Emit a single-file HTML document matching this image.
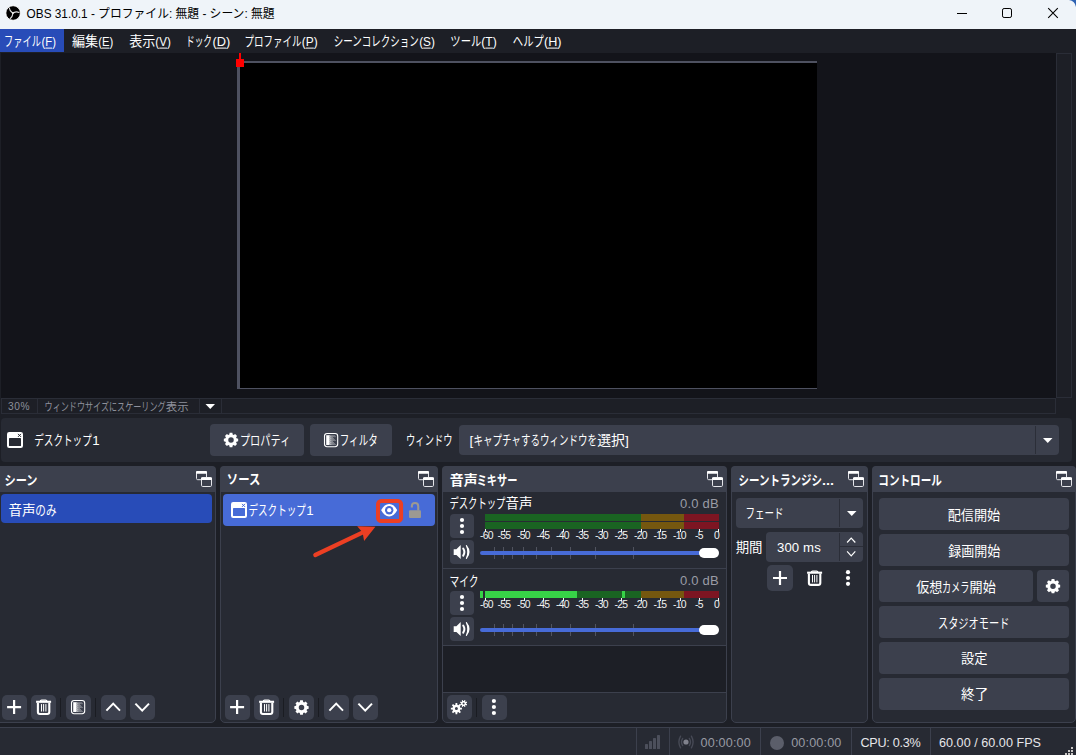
<!DOCTYPE html>
<html lang="ja">
<head>
<meta charset="utf-8">
<title>OBS 31.0.1 - プロファイル: 無題 - シーン: 無題</title>
<style>
*{box-sizing:border-box;margin:0;padding:0}
html,body{width:1076px;height:755px;overflow:hidden;background:#1d1f26}
body{font-family:"Liberation Sans",sans-serif;font-size:13px;color:#fff;position:relative}
#app{position:absolute;left:0;top:0;width:1076px;height:755px;overflow:hidden;background:#1d1f26}
.a{position:absolute}
.tp{position:absolute;overflow:visible;pointer-events:none}
.tp text{font-family:"Liberation Sans","Noto Sans CJK JP",sans-serif;stroke:none}
.tl{position:absolute;color:transparent;white-space:nowrap;overflow:hidden;line-height:1;font-family:"Liberation Sans",sans-serif}
.lt{position:absolute;white-space:nowrap;line-height:1;font-family:"Liberation Sans",sans-serif}
.ic{position:absolute;overflow:visible}
/* title bar */
#titlebar{left:0;top:0;width:1076px;height:29px;background:#eff4f9}
/* menu */
#menubar{left:0;top:29px;width:1076px;height:24px;background:#1d1f26}
#menusel{left:0;top:29px;width:64px;height:23px;background:#284cb8}
/* preview */
#preview{left:1px;top:53px;width:1055px;height:345px;background:#13141a}
#vscroll{left:1056px;top:53px;width:16px;height:345px;background:#1d1f26;border:1px solid #2a2d37}
#zoomrow{left:1px;top:398px;width:1055px;height:16px;background:#1d1f26;border:1px solid #2a2d37}
.zsep{top:398px;width:1px;height:16px;background:#2a2d37}
#canvasb{left:237px;top:61px;width:580px;height:328px;background:#4e5160}
#canvas{left:240px;top:63px;width:577px;height:325px;background:#000}
#rsq{left:236px;top:59px;width:8px;height:8px;background:#f00}
#rln{left:239px;top:53px;width:2px;height:6px;background:#f00}
/* context bar */
#ctx{left:1px;top:418px;width:1071px;height:44px;background:#272a33;border-radius:4px}
.btn{position:absolute;background:#3c404d;border-radius:4px}
/* docks */
.dock{position:absolute;top:466px;height:257px;background:#272a33;border:1px solid #3c404d;border-radius:5px}
.dtitle{position:absolute;top:466px;height:26px;background:#3c404d;border-radius:4px 4px 0 0}
.tb{position:absolute;width:25px;height:25px;background:#3c404d;border-radius:5px}
.sep{position:absolute;width:1px;background:#1a1c22}
.hl{position:absolute;height:1px;background:#3c404d}
/* status bar */
#status{left:0;top:727px;width:1076px;height:28px;background:#272a33;border-top:1px solid #3c404d}
.ssep{position:absolute;top:728px;width:1px;height:27px;background:#3c404d}
</style>
</head>
<body>
<div id="app">

<!-- ===== window title bar ===== -->
<div id="titlebar" class="a"></div>
<svg class="ic" style="left:4px;top:4px" width="19" height="19" viewBox="0 0 19 19"><g transform="translate(0.10 0.00)"><circle cx="9" cy="9" r="7.30" fill="#000" stroke="#fff" stroke-width="0.9"/><path d="M0 0C-1.5 -1.2 -3.2 -1.8 -3.5 -5.0" fill="none" stroke="#dcdcdc" stroke-width="1.15" stroke-linecap="round" transform="translate(8.75 9) rotate(0)"/><path d="M0 0C-1.5 -1.2 -3.2 -1.8 -3.5 -5.0" fill="none" stroke="#dcdcdc" stroke-width="1.15" stroke-linecap="round" transform="translate(8.75 9) rotate(120)"/><path d="M0 0C-1.5 -1.2 -3.2 -1.8 -3.5 -5.0" fill="none" stroke="#dcdcdc" stroke-width="1.15" stroke-linecap="round" transform="translate(8.75 9) rotate(240)"/><circle cx="8.75" cy="9" r="1.0" fill="#e8e8e8"/></g></svg>
<svg class="tp" style="left:25px;top:5px" width="253" height="18" fill="#000"><text x="1.6" y="13.1" font-size="12.2" textLength="248" lengthAdjust="spacingAndGlyphs">OBS 31.0.1 - プロファイル: 無題 - シーン: 無題</text></svg>

<svg class="ic" style="left:0;top:0" width="1076" height="29" viewBox="0 0 1076 29"><path d="M957 13.5H967" stroke="#000" stroke-width="1"/><rect x="1002.5" y="8.5" width="9" height="9" rx="1.6" fill="none" stroke="#000" stroke-width="1"/><path d="M1048.2 8.2L1057.8 17.8M1057.8 8.2L1048.2 17.8" stroke="#000" stroke-width="1.1"/><path d="M1069 0H1076V7Q1075 1 1069 0Z" fill="#2f63b3"/></svg>

<!-- ===== menu bar ===== -->
<div id="menubar" class="a"></div>
<div id="menusel" class="a"></div>
<svg class="tp" style="left:3px;top:33px" width="56" height="19" fill="#ffffff"><text x="1.1" y="13.4" font-size="13.3" textLength="37" lengthAdjust="spacingAndGlyphs">ファイル</text><text x="38.54" y="13.4" font-size="13.3" textLength="14.4" lengthAdjust="spacingAndGlyphs">(F)</text><rect x="42.38" y="14.60" width="6.70" height="1" stroke="none"/></svg>
<svg class="tp" style="left:70px;top:33px" width="46" height="19" fill="#ffffff"><text x="1.96" y="13.4" font-size="13.3" textLength="26.2" lengthAdjust="spacingAndGlyphs">編集</text><text x="28.18" y="13.4" font-size="13.3" textLength="15" lengthAdjust="spacingAndGlyphs">(E)</text><rect x="32.06" y="14.60" width="7.29" height="1" stroke="none"/></svg>
<svg class="tp" style="left:127px;top:33px" width="47" height="19" fill="#ffffff"><text x="2.13" y="13.4" font-size="13.3" textLength="26.2" lengthAdjust="spacingAndGlyphs">表示</text><text x="28.36" y="13.4" font-size="13.3" textLength="15.5" lengthAdjust="spacingAndGlyphs">(V)</text><rect x="32.24" y="14.60" width="7.81" height="1" stroke="none"/></svg>
<svg class="tp" style="left:186px;top:33px" width="47" height="19" fill="#ffffff"><text x="0" y="13.4" font-size="13.3" textLength="26" lengthAdjust="spacingAndGlyphs">ドック</text><text x="26.57" y="13.4" font-size="13.3" textLength="17.7" lengthAdjust="spacingAndGlyphs">(D)</text><rect x="30.53" y="14.60" width="9.75" height="1" stroke="none"/></svg>
<svg class="tp" style="left:244px;top:33px" width="77" height="19" fill="#ffffff"><text x="0.62" y="13.4" font-size="13.3" textLength="57" lengthAdjust="spacingAndGlyphs">プロファイル</text><text x="57.87" y="13.4" font-size="13.3" textLength="15.9" lengthAdjust="spacingAndGlyphs">(P)</text><rect x="61.80" y="14.60" width="8.00" height="1" stroke="none"/></svg>
<svg class="tp" style="left:333px;top:33px" width="105" height="19" fill="#ffffff"><text x="0.83" y="13.4" font-size="13.3" textLength="85" lengthAdjust="spacingAndGlyphs">シーンコレクション</text><text x="86.15" y="13.4" font-size="13.3" textLength="15.7" lengthAdjust="spacingAndGlyphs">(S)</text><rect x="90.22" y="14.60" width="7.56" height="1" stroke="none"/></svg>
<svg class="tp" style="left:449px;top:34px" width="51" height="18" fill="#ffffff"><text x="1.34" y="12.4" font-size="13.3" textLength="31" lengthAdjust="spacingAndGlyphs">ツール</text><text x="32.34" y="12.4" font-size="13.3" textLength="15.5" lengthAdjust="spacingAndGlyphs">(T)</text><rect x="36.35" y="13.60" width="7.49" height="1" stroke="none"/></svg>
<svg class="tp" style="left:511px;top:33px" width="54" height="19" fill="#ffffff"><text x="1.85" y="13.4" font-size="13.3" textLength="31" lengthAdjust="spacingAndGlyphs">ヘルプ</text><text x="33.06" y="13.4" font-size="13.3" textLength="17.5" lengthAdjust="spacingAndGlyphs">(H)</text><rect x="36.94" y="14.60" width="9.69" height="1" stroke="none"/></svg>


<!-- ===== preview ===== -->
<div id="preview" class="a"></div>
<div id="vscroll" class="a"></div>
<div id="canvasb" class="a"></div>
<div id="canvas" class="a"></div>
<div id="rln" class="a"></div>
<div id="rsq" class="a"></div>
<div id="zoomrow" class="a"></div>
<div class="a zsep" style="left:37px"></div>
<div class="a zsep" style="left:199px"></div>
<div class="a zsep" style="left:221px"></div>
<span class="lt" style="left:8px;top:401.6px;font-size:10.2px;color:#8d909b;letter-spacing:0.55px">30%</span>
<svg class="tp" style="left:43px;top:398px" width="149" height="17" fill="#8d909b"><text x="1.55" y="12.62" font-size="11.5" textLength="121" lengthAdjust="spacingAndGlyphs">ウィンドウサイズにスケーリング</text><text x="122.78" y="12.62" font-size="11.5" textLength="22.9" lengthAdjust="spacingAndGlyphs">表示</text></svg>

<svg class="ic" style="left:205px;top:404px" width="10.5" height="6" viewBox="0 0 10.5 6"><g transform="translate(0.50 0.00)"><path d="M0 0H9.5 L4.75 5Z" fill="#fff"/></g></svg>

<!-- ===== source context bar ===== -->
<div id="ctx" class="a"></div>
<svg class="ic" style="left:7px;top:432px" width="17" height="17" viewBox="0 0 17 17"><rect x="0" y="0" width="16" height="16" rx="2.2" fill="#fff"/><rect x="2" y="6" width="12" height="8" rx="0.6" fill="#272a33"/><path d="M11 1.9L14 4.9M14 1.9L11 4.9" stroke="#272a33" stroke-width="1" fill="none"/></svg>
<svg class="tp" style="left:33px;top:432px" width="67" height="18" fill="#ffffff"><text x="1.25" y="13.48" font-size="13.3" textLength="57.5" lengthAdjust="spacingAndGlyphs">デスクトップ</text><text x="59.22" y="13.48" font-size="13.3">1</text></svg>

<div class="btn" style="left:210px;top:424px;width:94px;height:32px"></div>
<svg class="ic" style="left:222px;top:431px" width="19" height="19" viewBox="0 0 19 19"><path d="M7.33 3.50 L7.63 1.83 L10.37 1.83 L10.67 3.50 L11.71 3.93 L13.10 2.96 L15.04 4.90 L14.07 6.29 L14.50 7.33 L16.17 7.63 L16.17 10.37 L14.50 10.67 L14.07 11.71 L15.04 13.10 L13.10 15.04 L11.71 14.07 L10.67 14.50 L10.37 16.17 L7.63 16.17 L7.33 14.50 L6.29 14.07 L4.90 15.04 L2.96 13.10 L3.93 11.71 L3.50 10.67 L1.83 10.37 L1.83 7.63 L3.50 7.33 L3.93 6.29 L2.96 4.90 L4.90 2.96 L6.29 3.93Z M6.25 9.00 a2.75 2.75 0 1 0 5.50 0 a2.75 2.75 0 1 0 -5.50 0Z" fill="#fff" fill-rule="evenodd"/></svg>
<svg class="tp" style="left:239px;top:432px" width="54" height="18" fill="#ffffff"><text x="0.89" y="13.32" font-size="13.3" textLength="50.5" lengthAdjust="spacingAndGlyphs">プロパティ</text></svg>

<div class="btn" style="left:310px;top:424px;width:82px;height:32px"></div>
<svg class="ic" style="left:324px;top:433px" width="15.2" height="15.2" viewBox="0 0 15.2 15.2"><rect x="0.5" y="0.5" width="13.2" height="13.2" rx="2.6" fill="none" stroke="#fff" stroke-width="1.1"/><rect x="2.2" y="2.2" width="3.3" height="9.8" fill="#fff"/><rect x="5.50" y="2.20" width="1" height="0.98" fill="#fff" fill-opacity="0.95"/><rect x="7.50" y="2.20" width="1" height="0.98" fill="#fff" fill-opacity="0.75"/><rect x="9.50" y="2.20" width="1" height="0.98" fill="#fff" fill-opacity="0.60"/><rect x="5.50" y="3.18" width="1" height="0.98" fill="#fff" fill-opacity="0.55"/><rect x="6.50" y="3.18" width="1" height="0.98" fill="#fff" fill-opacity="0.95"/><rect x="8.50" y="3.18" width="1" height="0.98" fill="#fff" fill-opacity="0.75"/><rect x="10.50" y="3.18" width="1" height="0.98" fill="#fff" fill-opacity="0.60"/><rect x="5.50" y="4.16" width="1" height="0.98" fill="#fff" fill-opacity="0.95"/><rect x="7.50" y="4.16" width="1" height="0.98" fill="#fff" fill-opacity="0.75"/><rect x="5.50" y="5.14" width="1" height="0.98" fill="#fff" fill-opacity="0.55"/><rect x="6.50" y="5.14" width="1" height="0.98" fill="#fff" fill-opacity="0.95"/><rect x="8.50" y="5.14" width="1" height="0.98" fill="#fff" fill-opacity="0.75"/><rect x="5.50" y="6.12" width="1" height="0.98" fill="#fff" fill-opacity="0.95"/><rect x="7.50" y="6.12" width="1" height="0.98" fill="#fff" fill-opacity="0.75"/><rect x="9.50" y="6.12" width="1" height="0.98" fill="#fff" fill-opacity="0.60"/><rect x="5.50" y="7.10" width="1" height="0.98" fill="#fff" fill-opacity="0.55"/><rect x="6.50" y="7.10" width="1" height="0.98" fill="#fff" fill-opacity="0.95"/><rect x="8.50" y="7.10" width="1" height="0.98" fill="#fff" fill-opacity="0.75"/><rect x="10.50" y="7.10" width="1" height="0.98" fill="#fff" fill-opacity="0.60"/><rect x="5.50" y="8.08" width="1" height="0.98" fill="#fff" fill-opacity="0.95"/><rect x="7.50" y="8.08" width="1" height="0.98" fill="#fff" fill-opacity="0.75"/><rect x="5.50" y="9.06" width="1" height="0.98" fill="#fff" fill-opacity="0.55"/><rect x="6.50" y="9.06" width="1" height="0.98" fill="#fff" fill-opacity="0.95"/><rect x="8.50" y="9.06" width="1" height="0.98" fill="#fff" fill-opacity="0.75"/><rect x="5.50" y="10.04" width="1" height="0.98" fill="#fff" fill-opacity="0.95"/><rect x="7.50" y="10.04" width="1" height="0.98" fill="#fff" fill-opacity="0.75"/><rect x="9.50" y="10.04" width="1" height="0.98" fill="#fff" fill-opacity="0.60"/><rect x="5.50" y="11.02" width="1" height="0.98" fill="#fff" fill-opacity="0.55"/><rect x="6.50" y="11.02" width="1" height="0.98" fill="#fff" fill-opacity="0.95"/><rect x="8.50" y="11.02" width="1" height="0.98" fill="#fff" fill-opacity="0.75"/><rect x="10.50" y="11.02" width="1" height="0.98" fill="#fff" fill-opacity="0.60"/></svg>
<svg class="tp" style="left:339px;top:432px" width="42" height="18" fill="#ffffff"><text x="0.77" y="13.21" font-size="13.3" textLength="38" lengthAdjust="spacingAndGlyphs">フィルタ</text></svg>

<svg class="tp" style="left:405px;top:432px" width="51" height="18" fill="#ffffff"><text x="1.07" y="13.12" font-size="13.3" textLength="46.5" lengthAdjust="spacingAndGlyphs">ウィンドウ</text></svg>

<div class="btn" style="left:459px;top:425px;width:600px;height:30px"></div>
<div class="a" style="left:1035px;top:426px;width:1px;height:28px;background:#2b2e38"></div>
<svg class="tp" style="left:468px;top:431px" width="164" height="19" fill="#ffffff"><text x="1.49" y="13.84" font-size="13.3">[</text><text x="5.44" y="13.84" font-size="13.3" textLength="123.5" lengthAdjust="spacingAndGlyphs">キャプチャするウィンドウを</text><text x="129.18" y="13.84" font-size="13.3" textLength="31.6" lengthAdjust="spacingAndGlyphs">選択]</text></svg>

<svg class="ic" style="left:1043px;top:438px" width="10.5" height="6" viewBox="0 0 10.5 6"><path d="M0 0H9.5 L4.75 5Z" fill="#fff"/></svg>

<!-- scenes dock -->
<div class="dock" style="left:-6px;width:222px"></div>
<div class="dtitle" style="left:-6px;width:222px"></div>
<svg class="tp" style="left:3px;top:472px" width="38" height="17" fill="#ffffff"><text x="1.48" y="12.55" font-size="13.3" font-weight="bold" textLength="33" lengthAdjust="spacingAndGlyphs">シーン</text></svg>
<svg class="ic" style="left:196px;top:471px" width="17" height="17" viewBox="0 0 17 17"><rect x="0.5" y="0.5" width="10" height="8.2" rx="1.2" fill="none" stroke="#e4e5ea" stroke-width="1"/><rect x="0" y="0" width="11" height="2.7" rx="1" fill="#fff"/><rect x="5" y="6.2" width="11" height="9.8" rx="1.4" fill="#3c404d"/><rect x="5.5" y="6.7" width="10" height="8.8" rx="1.2" fill="none" stroke="#e4e5ea" stroke-width="1"/><rect x="5" y="6.2" width="11" height="2.9" rx="1" fill="#fff"/></svg>
<div class="a" style="left:1px;top:494px;width:211px;height:29px;background:#284cb8;border-radius:4px"></div>
<svg class="tp" style="left:7px;top:501px" width="53" height="19" fill="#ffffff"><text x="1.45" y="14.05" font-size="13.3" textLength="27.2" lengthAdjust="spacingAndGlyphs">音声</text><text x="28.34" y="14.05" font-size="13.3" textLength="21.2" lengthAdjust="spacingAndGlyphs">のみ</text></svg>
<div class="tb" style="left:2px;top:695px"></div>
<svg class="ic" style="left:4px;top:697px" width="21" height="21" viewBox="0 0 21 21"><g transform="translate(0.10 0.10)"><path d="M3.00 10.00H17.00M10.00 3.00V17.00" stroke="#fff" stroke-width="2.20" fill="none"/></g></svg>
<div class="tb" style="left:31px;top:695px"></div>
<svg class="ic" style="left:33px;top:698px" width="21" height="19" viewBox="0 0 21 19"><g transform="translate(0.60 0.70)"><g fill="none" stroke="#fff"><path d="M2.5 3.1H17.5" stroke-width="2.1"/><path d="M6.8 2.4Q6.8 1.5 8 1.5H12Q13.2 1.5 13.2 2.4" stroke-width="1.3"/><path d="M4.3 4V13.3Q4.3 15.3 6.4 15.3H13.6Q15.7 15.3 15.7 13.3V4" stroke-width="2.1"/><path d="M7.9 5.4V12.8M10 5.4V12.8M12.3 5.4V12.8" stroke-width="1"/></g></g></svg>
<div class="sep" style="left:60px;top:698px;height:19px"></div>
<div class="tb" style="left:66px;top:695px"></div>
<svg class="ic" style="left:71px;top:700px" width="15.2" height="15.2" viewBox="0 0 15.2 15.2"><rect x="0.5" y="0.5" width="13.2" height="13.2" rx="2.6" fill="none" stroke="#fff" stroke-width="1.1"/><rect x="2.2" y="2.2" width="3.3" height="9.8" fill="#fff"/><rect x="5.50" y="2.20" width="1" height="0.98" fill="#fff" fill-opacity="0.95"/><rect x="7.50" y="2.20" width="1" height="0.98" fill="#fff" fill-opacity="0.75"/><rect x="9.50" y="2.20" width="1" height="0.98" fill="#fff" fill-opacity="0.60"/><rect x="5.50" y="3.18" width="1" height="0.98" fill="#fff" fill-opacity="0.55"/><rect x="6.50" y="3.18" width="1" height="0.98" fill="#fff" fill-opacity="0.95"/><rect x="8.50" y="3.18" width="1" height="0.98" fill="#fff" fill-opacity="0.75"/><rect x="10.50" y="3.18" width="1" height="0.98" fill="#fff" fill-opacity="0.60"/><rect x="5.50" y="4.16" width="1" height="0.98" fill="#fff" fill-opacity="0.95"/><rect x="7.50" y="4.16" width="1" height="0.98" fill="#fff" fill-opacity="0.75"/><rect x="5.50" y="5.14" width="1" height="0.98" fill="#fff" fill-opacity="0.55"/><rect x="6.50" y="5.14" width="1" height="0.98" fill="#fff" fill-opacity="0.95"/><rect x="8.50" y="5.14" width="1" height="0.98" fill="#fff" fill-opacity="0.75"/><rect x="5.50" y="6.12" width="1" height="0.98" fill="#fff" fill-opacity="0.95"/><rect x="7.50" y="6.12" width="1" height="0.98" fill="#fff" fill-opacity="0.75"/><rect x="9.50" y="6.12" width="1" height="0.98" fill="#fff" fill-opacity="0.60"/><rect x="5.50" y="7.10" width="1" height="0.98" fill="#fff" fill-opacity="0.55"/><rect x="6.50" y="7.10" width="1" height="0.98" fill="#fff" fill-opacity="0.95"/><rect x="8.50" y="7.10" width="1" height="0.98" fill="#fff" fill-opacity="0.75"/><rect x="10.50" y="7.10" width="1" height="0.98" fill="#fff" fill-opacity="0.60"/><rect x="5.50" y="8.08" width="1" height="0.98" fill="#fff" fill-opacity="0.95"/><rect x="7.50" y="8.08" width="1" height="0.98" fill="#fff" fill-opacity="0.75"/><rect x="5.50" y="9.06" width="1" height="0.98" fill="#fff" fill-opacity="0.55"/><rect x="6.50" y="9.06" width="1" height="0.98" fill="#fff" fill-opacity="0.95"/><rect x="8.50" y="9.06" width="1" height="0.98" fill="#fff" fill-opacity="0.75"/><rect x="5.50" y="10.04" width="1" height="0.98" fill="#fff" fill-opacity="0.95"/><rect x="7.50" y="10.04" width="1" height="0.98" fill="#fff" fill-opacity="0.75"/><rect x="9.50" y="10.04" width="1" height="0.98" fill="#fff" fill-opacity="0.60"/><rect x="5.50" y="11.02" width="1" height="0.98" fill="#fff" fill-opacity="0.55"/><rect x="6.50" y="11.02" width="1" height="0.98" fill="#fff" fill-opacity="0.95"/><rect x="8.50" y="11.02" width="1" height="0.98" fill="#fff" fill-opacity="0.75"/><rect x="10.50" y="11.02" width="1" height="0.98" fill="#fff" fill-opacity="0.60"/></svg>
<div class="sep" style="left:95px;top:698px;height:19px"></div>
<div class="tb" style="left:101px;top:695px"></div>
<svg class="ic" style="left:103px;top:697px" width="21" height="21" viewBox="0 0 21 21"><g transform="translate(0.20 0.10)"><path d="M3.20 13.50L10.00 6.50L16.80 13.50" fill="none" stroke="#fff" stroke-width="2.00"/></g></svg>
<div class="tb" style="left:130px;top:695px"></div>
<svg class="ic" style="left:132px;top:697px" width="21" height="21" viewBox="0 0 21 21"><g transform="translate(0.20 0.10)"><path d="M3.20 6.50L10.00 13.50L16.80 6.50" fill="none" stroke="#fff" stroke-width="2.00"/></g></svg>
<!-- sources dock -->
<div class="dock" style="left:220px;width:218px"></div>
<div class="dtitle" style="left:220px;width:218px"></div>
<svg class="tp" style="left:226px;top:472px" width="38" height="16" fill="#ffffff"><text x="0.84" y="12.3" font-size="13.3" font-weight="bold" textLength="33.5" lengthAdjust="spacingAndGlyphs">ソース</text></svg>
<svg class="ic" style="left:418px;top:471px" width="17" height="17" viewBox="0 0 17 17"><rect x="0.5" y="0.5" width="10" height="8.2" rx="1.2" fill="none" stroke="#e4e5ea" stroke-width="1"/><rect x="0" y="0" width="11" height="2.7" rx="1" fill="#fff"/><rect x="5" y="6.2" width="11" height="9.8" rx="1.4" fill="#3c404d"/><rect x="5.5" y="6.7" width="10" height="8.8" rx="1.2" fill="none" stroke="#e4e5ea" stroke-width="1"/><rect x="5" y="6.2" width="11" height="2.9" rx="1" fill="#fff"/></svg>
<div class="a" style="left:223px;top:494px;width:212px;height:32px;background:#476bd7;border-radius:4px"></div>
<svg class="ic" style="left:231px;top:502px" width="17" height="17" viewBox="0 0 17 17"><rect x="0" y="0" width="16" height="16" rx="2.2" fill="#fff"/><rect x="2" y="6" width="12" height="8" rx="0.6" fill="#476bd7"/><path d="M11 1.9L14 4.9M14 1.9L11 4.9" stroke="#476bd7" stroke-width="1" fill="none"/></svg>
<svg class="tp" style="left:247px;top:501px" width="67" height="18" fill="#ffffff"><text x="1.46" y="13.78" font-size="13.3" textLength="57.5" lengthAdjust="spacingAndGlyphs">デスクトップ</text><text x="59.24" y="13.78" font-size="13.3">1</text></svg>
<svg class="ic" style="left:381px;top:504px" width="17" height="13.4" viewBox="0 0 17 13.4"><g transform="translate(0.20 0.00)"><path d="M0 6.2C1.9 2.4 4.8 0 8 0C11.2 0 14.1 2.4 16 6.2C14.1 10 11.2 12.4 8 12.4C4.8 12.4 1.9 10 0 6.2Z" fill="#fff"/><circle cx="8" cy="6.2" r="4.2" fill="#476bd7"/><circle cx="8" cy="6.2" r="2.15" fill="#fff"/></g></svg>
<svg class="ic" style="left:408px;top:502px" width="13.4" height="17" viewBox="0 0 13.4 17"><g transform="translate(0.80 0.10)"><rect x="0.2" y="8.2" width="12" height="7.6" rx="1" fill="#9c9992"/><path d="M3.05 5.3V4.2Q3.05 0.95 6.25 0.95Q9.45 0.95 9.45 4.2V8.4" fill="none" stroke="#9c9992" stroke-width="2.1"/></g></svg>
<svg class="ic" style="left:300px;top:490px" width="120" height="80" viewBox="300 490 120 80"><rect x="378" y="500.95" width="23.1" height="20.15" rx="3.2" fill="none" stroke="#ec3f23" stroke-width="4"/><path d="M315.3 555.0L366 530.9" stroke="#ec3f23" stroke-width="4.2" stroke-linecap="round" fill="none"/><path d="M375.4 526.8L357.2 526.2L362.6 532.6L364.1 540.9Z" fill="#ec3f23"/></svg>
<div class="tb" style="left:225px;top:695px"></div>
<svg class="ic" style="left:227px;top:697px" width="21" height="21" viewBox="0 0 21 21"><g transform="translate(0.10 0.10)"><path d="M3.00 10.00H17.00M10.00 3.00V17.00" stroke="#fff" stroke-width="2.20" fill="none"/></g></svg>
<div class="tb" style="left:254px;top:695px"></div>
<svg class="ic" style="left:256px;top:698px" width="21" height="19" viewBox="0 0 21 19"><g transform="translate(0.60 0.70)"><g fill="none" stroke="#fff"><path d="M2.5 3.1H17.5" stroke-width="2.1"/><path d="M6.8 2.4Q6.8 1.5 8 1.5H12Q13.2 1.5 13.2 2.4" stroke-width="1.3"/><path d="M4.3 4V13.3Q4.3 15.3 6.4 15.3H13.6Q15.7 15.3 15.7 13.3V4" stroke-width="2.1"/><path d="M7.9 5.4V12.8M10 5.4V12.8M12.3 5.4V12.8" stroke-width="1"/></g></g></svg>
<div class="sep" style="left:283px;top:698px;height:19px"></div>
<div class="tb" style="left:289px;top:695px"></div>
<svg class="ic" style="left:292px;top:698px" width="19" height="19" viewBox="0 0 19 19"><g transform="translate(0.50 0.50)"><path d="M7.33 3.50 L7.63 1.83 L10.37 1.83 L10.67 3.50 L11.71 3.93 L13.10 2.96 L15.04 4.90 L14.07 6.29 L14.50 7.33 L16.17 7.63 L16.17 10.37 L14.50 10.67 L14.07 11.71 L15.04 13.10 L13.10 15.04 L11.71 14.07 L10.67 14.50 L10.37 16.17 L7.63 16.17 L7.33 14.50 L6.29 14.07 L4.90 15.04 L2.96 13.10 L3.93 11.71 L3.50 10.67 L1.83 10.37 L1.83 7.63 L3.50 7.33 L3.93 6.29 L2.96 4.90 L4.90 2.96 L6.29 3.93Z M6.25 9.00 a2.75 2.75 0 1 0 5.50 0 a2.75 2.75 0 1 0 -5.50 0Z" fill="#fff" fill-rule="evenodd"/></g></svg>
<div class="sep" style="left:318px;top:698px;height:19px"></div>
<div class="tb" style="left:324px;top:695px"></div>
<svg class="ic" style="left:326px;top:697px" width="21" height="21" viewBox="0 0 21 21"><g transform="translate(0.20 0.10)"><path d="M3.20 13.50L10.00 6.50L16.80 13.50" fill="none" stroke="#fff" stroke-width="2.00"/></g></svg>
<div class="tb" style="left:353px;top:695px"></div>
<svg class="ic" style="left:355px;top:697px" width="21" height="21" viewBox="0 0 21 21"><g transform="translate(0.20 0.10)"><path d="M3.20 6.50L10.00 13.50L16.80 6.50" fill="none" stroke="#fff" stroke-width="2.00"/></g></svg>
<!-- audio mixer dock -->
<div class="dock" style="left:442px;width:285px"></div>
<div class="dtitle" style="left:442px;width:285px"></div>
<svg class="tp" style="left:448px;top:471px" width="73" height="18" fill="#ffffff"><text x="1.86" y="13.65" font-size="13.3" font-weight="bold" textLength="27.8" lengthAdjust="spacingAndGlyphs">音声</text><text x="28.64" y="13.65" font-size="13.3" font-weight="bold" textLength="40.8" lengthAdjust="spacingAndGlyphs">ミキサー</text></svg>
<svg class="ic" style="left:707px;top:471px" width="17" height="17" viewBox="0 0 17 17"><rect x="0.5" y="0.5" width="10" height="8.2" rx="1.2" fill="none" stroke="#e4e5ea" stroke-width="1"/><rect x="0" y="0" width="11" height="2.7" rx="1" fill="#fff"/><rect x="5" y="6.2" width="11" height="9.8" rx="1.4" fill="#3c404d"/><rect x="5.5" y="6.7" width="10" height="8.8" rx="1.2" fill="none" stroke="#e4e5ea" stroke-width="1"/><rect x="5" y="6.2" width="11" height="2.9" rx="1" fill="#fff"/></svg>
<div class="a" style="left:443px;top:646px;width:283px;height:46px;background:#1d1f26"></div>
<div class="hl" style="left:443px;top:568px;width:283px"></div>
<div class="hl" style="left:443px;top:645px;width:283px"></div>
<div class="hl" style="left:443px;top:692px;width:283px"></div>
<style>.ml{font-size:10.4px;color:#f2f2f2;letter-spacing:-0.7px}</style>
<svg class="tp" style="left:448px;top:494px" width="87" height="19" fill="#ffffff"><text x="1.38" y="14.31" font-size="13.3" textLength="56" lengthAdjust="spacingAndGlyphs">デスクトップ</text><text x="57.58" y="14.31" font-size="13.3" textLength="27" lengthAdjust="spacingAndGlyphs">音声</text></svg>
<span class="lt" style="left:660px;width:59px;text-align:right;top:496.9px;font-size:13px;color:#9a9ca6;letter-spacing:0.25px">0.0 dB</span>
<div class="a" style="left:485px;top:514px;width:156px;height:7px;background:#1a6422"></div><div class="a" style="left:641px;top:514px;width:43px;height:7px;background:#75570f"></div><div class="a" style="left:684px;top:514px;width:35px;height:7px;background:#7d1522"></div>
<div class="a" style="left:485px;top:522px;width:156px;height:7px;background:#1a6422"></div><div class="a" style="left:641px;top:522px;width:43px;height:7px;background:#75570f"></div><div class="a" style="left:684px;top:522px;width:35px;height:7px;background:#7d1522"></div>
<span class="lt ml" style="left:471.5px;width:30px;text-align:center;top:530.5px">-60</span>
<span class="lt ml" style="left:489px;width:30px;text-align:center;top:530.5px">-55</span>
<span class="lt ml" style="left:508.5px;width:30px;text-align:center;top:530.5px">-50</span>
<span class="lt ml" style="left:528px;width:30px;text-align:center;top:530.5px">-45</span>
<span class="lt ml" style="left:547.5px;width:30px;text-align:center;top:530.5px">-40</span>
<span class="lt ml" style="left:567px;width:30px;text-align:center;top:530.5px">-35</span>
<span class="lt ml" style="left:586.5px;width:30px;text-align:center;top:530.5px">-30</span>
<span class="lt ml" style="left:606px;width:30px;text-align:center;top:530.5px">-25</span>
<span class="lt ml" style="left:625.5px;width:30px;text-align:center;top:530.5px">-20</span>
<span class="lt ml" style="left:645px;width:30px;text-align:center;top:530.5px">-15</span>
<span class="lt ml" style="left:664.5px;width:30px;text-align:center;top:530.5px">-10</span>
<span class="lt ml" style="left:684px;width:30px;text-align:center;top:530.5px">-5</span>
<span class="lt ml" style="left:699px;width:20px;text-align:right;top:530.5px">0</span>
<div class="a" style="left:485px;top:529px;width:1px;height:3px;background:#f4f4f4"></div>
<div class="a" style="left:504px;top:529px;width:1px;height:3px;background:#f4f4f4"></div>
<div class="a" style="left:524px;top:529px;width:1px;height:3px;background:#f4f4f4"></div>
<div class="a" style="left:543px;top:529px;width:1px;height:3px;background:#f4f4f4"></div>
<div class="a" style="left:563px;top:529px;width:1px;height:3px;background:#f4f4f4"></div>
<div class="a" style="left:582px;top:529px;width:1px;height:3px;background:#f4f4f4"></div>
<div class="a" style="left:602px;top:529px;width:1px;height:3px;background:#f4f4f4"></div>
<div class="a" style="left:621px;top:529px;width:1px;height:3px;background:#f4f4f4"></div>
<div class="a" style="left:641px;top:529px;width:1px;height:3px;background:#f4f4f4"></div>
<div class="a" style="left:660px;top:529px;width:1px;height:3px;background:#f4f4f4"></div>
<div class="a" style="left:680px;top:529px;width:1px;height:3px;background:#f4f4f4"></div>
<div class="a" style="left:699px;top:529px;width:1px;height:3px;background:#f4f4f4"></div>
<div class="a" style="left:718px;top:529px;width:1px;height:3px;background:#f4f4f4"></div>
<div class="btn" style="left:450px;top:514px;width:24px;height:24px"></div>
<svg class="ic" style="left:457px;top:516px" width="11" height="21" viewBox="0 0 11 21"><circle cx="5" cy="4.00" r="2.10" fill="#fff"/><circle cx="5" cy="10.00" r="2.10" fill="#fff"/><circle cx="5" cy="16.00" r="2.10" fill="#fff"/></svg>
<div class="btn" style="left:450px;top:540px;width:24px;height:24px"></div>
<svg class="ic" style="left:450px;top:540px" width="25" height="25" viewBox="0 0 25 25"><path d="M3.7 9.2H6.4L10.7 4.9V19.1L6.4 14.9H3.7Z" fill="#fff"/><path d="M13.2 8.5Q15.6 12 13.2 15.6" fill="none" stroke="#fff" stroke-width="2" stroke-linecap="round"/><path d="M16.4 5.6Q21.6 12 16.4 18.5Q19.2 12 16.4 5.6Z" fill="#fff" stroke="#fff" stroke-width="1.1" stroke-linejoin="round"/></svg>
<div class="a" style="left:494px;top:547px;width:1px;height:12px;background:#50535f"></div>
<div class="a" style="left:503px;top:547px;width:1px;height:12px;background:#50535f"></div>
<div class="a" style="left:512px;top:547px;width:1px;height:12px;background:#50535f"></div>
<div class="a" style="left:523px;top:547px;width:1px;height:12px;background:#50535f"></div>
<div class="a" style="left:536px;top:547px;width:1px;height:12px;background:#50535f"></div>
<div class="a" style="left:551px;top:547px;width:1px;height:12px;background:#50535f"></div>
<div class="a" style="left:570px;top:547px;width:1px;height:12px;background:#50535f"></div>
<div class="a" style="left:595px;top:547px;width:1px;height:12px;background:#50535f"></div>
<div class="a" style="left:633px;top:547px;width:1px;height:12px;background:#50535f"></div>
<div class="a" style="left:480px;top:551px;width:230px;height:4px;border-radius:2px;background:#476bd7"></div>
<div class="a" style="left:699px;top:548px;width:20px;height:10px;border-radius:5px;background:#fff"></div>
<svg class="tp" style="left:448px;top:573px" width="34" height="17" fill="#ffffff"><text x="1.51" y="12.88" font-size="13.3" textLength="29" lengthAdjust="spacingAndGlyphs">マイク</text></svg>
<span class="lt" style="left:660px;width:59px;text-align:right;top:574.3px;font-size:13px;color:#9a9ca6;letter-spacing:0.25px">0.0 dB</span>
<div class="a" style="left:485px;top:591px;width:156px;height:7px;background:#1a6422"></div><div class="a" style="left:641px;top:591px;width:43px;height:7px;background:#75570f"></div><div class="a" style="left:684px;top:591px;width:35px;height:7px;background:#7d1522"></div><div class="a" style="left:485px;top:591px;width:92px;height:7px;background:#37d247"></div><div class="a" style="left:622px;top:591px;width:3px;height:7px;background:#37d247"></div><div class="a" style="left:480px;top:591px;width:3px;height:7px;background:#37d247"></div>
<span class="lt ml" style="left:471.5px;width:30px;text-align:center;top:599.5px">-60</span>
<span class="lt ml" style="left:489px;width:30px;text-align:center;top:599.5px">-55</span>
<span class="lt ml" style="left:508.5px;width:30px;text-align:center;top:599.5px">-50</span>
<span class="lt ml" style="left:528px;width:30px;text-align:center;top:599.5px">-45</span>
<span class="lt ml" style="left:547.5px;width:30px;text-align:center;top:599.5px">-40</span>
<span class="lt ml" style="left:567px;width:30px;text-align:center;top:599.5px">-35</span>
<span class="lt ml" style="left:586.5px;width:30px;text-align:center;top:599.5px">-30</span>
<span class="lt ml" style="left:606px;width:30px;text-align:center;top:599.5px">-25</span>
<span class="lt ml" style="left:625.5px;width:30px;text-align:center;top:599.5px">-20</span>
<span class="lt ml" style="left:645px;width:30px;text-align:center;top:599.5px">-15</span>
<span class="lt ml" style="left:664.5px;width:30px;text-align:center;top:599.5px">-10</span>
<span class="lt ml" style="left:684px;width:30px;text-align:center;top:599.5px">-5</span>
<span class="lt ml" style="left:699px;width:20px;text-align:right;top:599.5px">0</span>
<div class="a" style="left:485px;top:598px;width:1px;height:3px;background:#f4f4f4"></div>
<div class="a" style="left:504px;top:598px;width:1px;height:3px;background:#f4f4f4"></div>
<div class="a" style="left:524px;top:598px;width:1px;height:3px;background:#f4f4f4"></div>
<div class="a" style="left:543px;top:598px;width:1px;height:3px;background:#f4f4f4"></div>
<div class="a" style="left:563px;top:598px;width:1px;height:3px;background:#f4f4f4"></div>
<div class="a" style="left:582px;top:598px;width:1px;height:3px;background:#f4f4f4"></div>
<div class="a" style="left:602px;top:598px;width:1px;height:3px;background:#f4f4f4"></div>
<div class="a" style="left:621px;top:598px;width:1px;height:3px;background:#f4f4f4"></div>
<div class="a" style="left:641px;top:598px;width:1px;height:3px;background:#f4f4f4"></div>
<div class="a" style="left:660px;top:598px;width:1px;height:3px;background:#f4f4f4"></div>
<div class="a" style="left:680px;top:598px;width:1px;height:3px;background:#f4f4f4"></div>
<div class="a" style="left:699px;top:598px;width:1px;height:3px;background:#f4f4f4"></div>
<div class="a" style="left:718px;top:598px;width:1px;height:3px;background:#f4f4f4"></div>
<div class="btn" style="left:450px;top:591px;width:24px;height:24px"></div>
<svg class="ic" style="left:457px;top:593px" width="11" height="21" viewBox="0 0 11 21"><circle cx="5" cy="4.00" r="2.10" fill="#fff"/><circle cx="5" cy="10.00" r="2.10" fill="#fff"/><circle cx="5" cy="16.00" r="2.10" fill="#fff"/></svg>
<div class="btn" style="left:450px;top:617px;width:24px;height:24px"></div>
<svg class="ic" style="left:450px;top:617px" width="25" height="25" viewBox="0 0 25 25"><path d="M3.7 9.2H6.4L10.7 4.9V19.1L6.4 14.9H3.7Z" fill="#fff"/><path d="M13.2 8.5Q15.6 12 13.2 15.6" fill="none" stroke="#fff" stroke-width="2" stroke-linecap="round"/><path d="M16.4 5.6Q21.6 12 16.4 18.5Q19.2 12 16.4 5.6Z" fill="#fff" stroke="#fff" stroke-width="1.1" stroke-linejoin="round"/></svg>
<div class="a" style="left:494px;top:624px;width:1px;height:12px;background:#50535f"></div>
<div class="a" style="left:503px;top:624px;width:1px;height:12px;background:#50535f"></div>
<div class="a" style="left:512px;top:624px;width:1px;height:12px;background:#50535f"></div>
<div class="a" style="left:523px;top:624px;width:1px;height:12px;background:#50535f"></div>
<div class="a" style="left:536px;top:624px;width:1px;height:12px;background:#50535f"></div>
<div class="a" style="left:551px;top:624px;width:1px;height:12px;background:#50535f"></div>
<div class="a" style="left:570px;top:624px;width:1px;height:12px;background:#50535f"></div>
<div class="a" style="left:595px;top:624px;width:1px;height:12px;background:#50535f"></div>
<div class="a" style="left:633px;top:624px;width:1px;height:12px;background:#50535f"></div>
<div class="a" style="left:480px;top:628px;width:230px;height:4px;border-radius:2px;background:#476bd7"></div>
<div class="a" style="left:699px;top:625px;width:20px;height:10px;border-radius:5px;background:#fff"></div>
<div class="tb" style="left:447px;top:695px"></div>
<svg class="ic" style="left:447px;top:695px" width="26" height="26" viewBox="0 0 26 26"><path d="M8.43 9.72 L8.52 8.07 L10.28 8.07 L10.37 9.72 L11.46 10.17 L12.69 9.07 L13.93 10.31 L12.83 11.54 L13.28 12.63 L14.93 12.72 L14.93 14.48 L13.28 14.57 L12.83 15.66 L13.93 16.89 L12.69 18.13 L11.46 17.03 L10.37 17.48 L10.28 19.13 L8.52 19.13 L8.43 17.48 L7.34 17.03 L6.11 18.13 L4.87 16.89 L5.97 15.66 L5.52 14.57 L3.87 14.48 L3.87 12.72 L5.52 12.63 L5.97 11.54 L4.87 10.31 L6.11 9.07 L7.34 10.17Z M7.90 13.60 a1.50 1.50 0 1 0 3.00 0 a1.50 1.50 0 1 0 -3.00 0Z M16.97 6.03 L17.44 5.00 L18.48 5.43 L18.09 6.49 L18.61 7.01 L19.67 6.62 L20.10 7.66 L19.07 8.13 L19.07 8.87 L20.10 9.34 L19.67 10.38 L18.61 9.99 L18.09 10.51 L18.48 11.57 L17.44 12.00 L16.97 10.97 L16.23 10.97 L15.76 12.00 L14.72 11.57 L15.11 10.51 L14.59 9.99 L13.53 10.38 L13.10 9.34 L14.13 8.87 L14.13 8.13 L13.10 7.66 L13.53 6.62 L14.59 7.01 L15.11 6.49 L14.72 5.43 L15.76 5.00 L16.23 6.03Z M15.60 8.50 a1.00 1.00 0 1 0 2.00 0 a1.00 1.00 0 1 0 -2.00 0Z" fill="#fff" fill-rule="evenodd"/></svg>
<div class="sep" style="left:476px;top:698px;height:19px"></div>
<div class="tb" style="left:482px;top:695px"></div>
<svg class="ic" style="left:488px;top:697px" width="11" height="21" viewBox="0 0 11 21"><g transform="translate(0.90 0.00)"><circle cx="5" cy="4.00" r="2.10" fill="#fff"/><circle cx="5" cy="10.00" r="2.10" fill="#fff"/><circle cx="5" cy="16.00" r="2.10" fill="#fff"/></g></svg>
<!-- scene transitions dock -->
<div class="dock" style="left:731px;width:137px"></div>
<div class="dtitle" style="left:731px;width:137px"></div>
<svg class="tp" style="left:737px;top:471px" width="100" height="18" fill="#ffffff"><text x="1.59" y="13.63" font-size="13.3" font-weight="bold" textLength="83.3" lengthAdjust="spacingAndGlyphs">シーントランジシ</text><text x="85.12" y="13.63" font-size="13.3" font-weight="bold" textLength="12" lengthAdjust="spacingAndGlyphs">...</text></svg>
<svg class="ic" style="left:848px;top:471px" width="17" height="17" viewBox="0 0 17 17"><rect x="0.5" y="0.5" width="10" height="8.2" rx="1.2" fill="none" stroke="#e4e5ea" stroke-width="1"/><rect x="0" y="0" width="11" height="2.7" rx="1" fill="#fff"/><rect x="5" y="6.2" width="11" height="9.8" rx="1.4" fill="#3c404d"/><rect x="5.5" y="6.7" width="10" height="8.8" rx="1.2" fill="none" stroke="#e4e5ea" stroke-width="1"/><rect x="5" y="6.2" width="11" height="2.9" rx="1" fill="#fff"/></svg>
<div class="btn" style="left:736px;top:498px;width:127px;height:30px"></div>
<div class="a" style="left:839px;top:499px;width:1px;height:28px;background:#2b2e38"></div>
<svg class="tp" style="left:745px;top:505px" width="42" height="17" fill="#ffffff"><text x="0.61" y="13.15" font-size="13.3" textLength="38" lengthAdjust="spacingAndGlyphs">フェード</text></svg>
<svg class="ic" style="left:847px;top:511px" width="10.5" height="6" viewBox="0 0 10.5 6"><path d="M0 0H9.5 L4.75 5Z" fill="#fff"/></svg>
<svg class="tp" style="left:734px;top:539px" width="31" height="18" fill="#ffffff"><text x="1.69" y="13.26" font-size="13.3" textLength="26.8" lengthAdjust="spacingAndGlyphs">期間</text></svg>
<div class="btn" style="left:766px;top:532px;width:97px;height:30px"></div>
<div class="a" style="left:839px;top:533px;width:1px;height:28px;background:#2b2e38"></div>
<div class="a" style="left:840px;top:546px;width:23px;height:1px;background:#2b2e38"></div>
<span class="lt" style="left:777px;top:541.0px;font-size:13.2px;color:#fff;letter-spacing:0.1px">300 ms</span>
<svg class="ic" style="left:841px;top:530px" width="21" height="21" viewBox="0 0 21 21"><g transform="translate(0.20 0.30)"><path d="M5.90 12.20L10.00 7.80L14.10 12.20" fill="none" stroke="#fff" stroke-width="1.20"/></g></svg>
<svg class="ic" style="left:841px;top:543px" width="21" height="21" viewBox="0 0 21 21"><g transform="translate(0.20 0.60)"><path d="M5.90 7.80L10.00 12.20L14.10 7.80" fill="none" stroke="#fff" stroke-width="1.20"/></g></svg>
<div class="btn" style="left:767px;top:565px;width:26px;height:26px;border-radius:5px"></div>
<svg class="ic" style="left:770px;top:568px" width="21" height="21" viewBox="0 0 21 21"><path d="M3.00 10.00H17.00M10.00 3.00V17.00" stroke="#fff" stroke-width="2.20" fill="none"/></svg>
<svg class="ic" style="left:804px;top:569px" width="21" height="19" viewBox="0 0 21 19"><g transform="translate(0.60 0.60)"><g fill="none" stroke="#fff"><path d="M2.5 3.1H17.5" stroke-width="2.1"/><path d="M6.8 2.4Q6.8 1.5 8 1.5H12Q13.2 1.5 13.2 2.4" stroke-width="1.3"/><path d="M4.3 4V13.3Q4.3 15.3 6.4 15.3H13.6Q15.7 15.3 15.7 13.3V4" stroke-width="2.1"/><path d="M7.9 5.4V12.8M10 5.4V12.8M12.3 5.4V12.8" stroke-width="1"/></g></g></svg>
<svg class="ic" style="left:843px;top:568px" width="11" height="21" viewBox="0 0 11 21"><circle cx="5" cy="4.20" r="2.10" fill="#fff"/><circle cx="5" cy="10.00" r="2.10" fill="#fff"/><circle cx="5" cy="15.80" r="2.10" fill="#fff"/></svg>
<!-- controls dock -->
<div class="dock" style="left:872px;width:204px"></div>
<div class="dtitle" style="left:872px;width:204px"></div>
<svg class="tp" style="left:878px;top:472px" width="68" height="17" fill="#ffffff"><text x="0.33" y="12.57" font-size="13.3" font-weight="bold" textLength="63.5" lengthAdjust="spacingAndGlyphs">コントロール</text></svg>
<svg class="ic" style="left:1056px;top:471px" width="17" height="17" viewBox="0 0 17 17"><rect x="0.5" y="0.5" width="10" height="8.2" rx="1.2" fill="none" stroke="#e4e5ea" stroke-width="1"/><rect x="0" y="0" width="11" height="2.7" rx="1" fill="#fff"/><rect x="5" y="6.2" width="11" height="9.8" rx="1.4" fill="#3c404d"/><rect x="5.5" y="6.7" width="10" height="8.8" rx="1.2" fill="none" stroke="#e4e5ea" stroke-width="1"/><rect x="5" y="6.2" width="11" height="2.9" rx="1" fill="#fff"/></svg>
<div class="btn" style="left:879px;top:498px;width:190px;height:32px"></div>
<svg class="tp" style="left:946px;top:506px" width="57" height="18" fill="#ffffff"><text x="1.65" y="13.65" font-size="13.3" textLength="52.6" lengthAdjust="spacingAndGlyphs">配信開始</text></svg>
<div class="btn" style="left:879px;top:534px;width:190px;height:32px"></div>
<svg class="tp" style="left:946px;top:542px" width="57" height="18" fill="#ffffff"><text x="2.14" y="13.65" font-size="13.3" textLength="52.1" lengthAdjust="spacingAndGlyphs">録画開始</text></svg>
<div class="btn" style="left:879px;top:570px;width:154px;height:32px"></div>
<svg class="tp" style="left:914px;top:578px" width="85" height="18" fill="#ffffff"><text x="2.24" y="13.65" font-size="13.3" textLength="26.2" lengthAdjust="spacingAndGlyphs">仮想</text><text x="27.93" y="13.65" font-size="13.3" textLength="27.4" lengthAdjust="spacingAndGlyphs">カメラ</text><text x="55.58" y="13.65" font-size="13.3" textLength="26.2" lengthAdjust="spacingAndGlyphs">開始</text></svg>
<div class="btn" style="left:879px;top:606px;width:190px;height:32px"></div>
<svg class="tp" style="left:937px;top:614px" width="76" height="18" fill="#ffffff"><text x="0.95" y="13.53" font-size="13.3" textLength="71.5" lengthAdjust="spacingAndGlyphs">スタジオモード</text></svg>
<div class="btn" style="left:879px;top:642px;width:190px;height:32px"></div>
<svg class="tp" style="left:959px;top:650px" width="31" height="18" fill="#ffffff"><text x="1.9" y="13.43" font-size="13.3" textLength="26.6" lengthAdjust="spacingAndGlyphs">設定</text></svg>
<div class="btn" style="left:879px;top:678px;width:190px;height:32px"></div>
<svg class="tp" style="left:959px;top:686px" width="31" height="18" fill="#ffffff"><text x="2.06" y="13.43" font-size="13.3" textLength="27.4" lengthAdjust="spacingAndGlyphs">終了</text></svg>
<div class="btn" style="left:1037px;top:570px;width:32px;height:32px"></div>
<svg class="ic" style="left:1044px;top:577px" width="19" height="19" viewBox="0 0 19 19"><g transform="translate(0.00 0.20)"><path d="M7.33 3.50 L7.63 1.83 L10.37 1.83 L10.67 3.50 L11.71 3.93 L13.10 2.96 L15.04 4.90 L14.07 6.29 L14.50 7.33 L16.17 7.63 L16.17 10.37 L14.50 10.67 L14.07 11.71 L15.04 13.10 L13.10 15.04 L11.71 14.07 L10.67 14.50 L10.37 16.17 L7.63 16.17 L7.33 14.50 L6.29 14.07 L4.90 15.04 L2.96 13.10 L3.93 11.71 L3.50 10.67 L1.83 10.37 L1.83 7.63 L3.50 7.33 L3.93 6.29 L2.96 4.90 L4.90 2.96 L6.29 3.93Z M6.25 9.00 a2.75 2.75 0 1 0 5.50 0 a2.75 2.75 0 1 0 -5.50 0Z" fill="#fff" fill-rule="evenodd"/></g></svg>

<!-- ===== status bar ===== -->
<div id="status" class="a"></div>
<style>.st{top:737.0px;font-size:12.6px;letter-spacing:0.16px}</style>
<div class="ssep" style="left:636px"></div>
<div class="ssep" style="left:669px"></div>
<div class="ssep" style="left:760px"></div>
<div class="ssep" style="left:851px"></div>
<div class="ssep" style="left:930px"></div>
<svg class="ic" style="left:645px;top:735px" width="16" height="15" viewBox="0 0 16 15"><rect x="0" y="9" width="3" height="5" rx="0.6" fill="#4c4f5b"/><rect x="4" y="6" width="3" height="8" rx="0.6" fill="#4c4f5b"/><rect x="8" y="3" width="3" height="11" rx="0.6" fill="#4c4f5b"/><rect x="12" y="0" width="3" height="14" rx="0.6" fill="#4c4f5b"/></svg>
<svg class="ic" style="left:676px;top:732px" width="21" height="21" viewBox="0 0 21 21"><circle cx="10" cy="10" r="2.6" fill="#80828d"/><path d="M6.7 6.4Q4.3 10 6.7 13.6M13.3 6.4Q15.7 10 13.3 13.6" fill="none" stroke="#474a56" stroke-width="1.35" stroke-linecap="round"/><path d="M4.6 4.1Q1.2 10 4.6 15.9M15.4 4.1Q18.8 10 15.4 15.9" fill="none" stroke="#474a56" stroke-width="1.35" stroke-linecap="round"/></svg>
<span class="lt st" style="left:700.6px;color:#989aa3">00:00:00</span>
<div class="a" style="left:770px;top:735.5px;width:14px;height:14px;border-radius:7px;background:#5b5e6a"></div>
<span class="lt st" style="left:791.2px;color:#989aa3">00:00:00</span>
<span class="lt st" style="left:860.4px;color:#e6e6ea;letter-spacing:-0.24px">CPU: 0.3%</span>
<span class="lt st" style="left:939px;color:#e6e6ea;letter-spacing:0.03px">60.00 / 60.00 FPS</span>
<svg class="ic" style="left:1060px;top:740px" width="17" height="16" viewBox="0 0 17 16"><rect x="11" y="7" width="2" height="2" fill="#c8c6c4"/><rect x="8" y="10" width="2" height="2" fill="#c8c6c4"/><rect x="11" y="10" width="2" height="2" fill="#c8c6c4"/><rect x="5" y="13" width="2" height="2" fill="#c8c6c4"/><rect x="8" y="13" width="2" height="2" fill="#c8c6c4"/><rect x="11" y="13" width="2" height="2" fill="#c8c6c4"/></svg>

</div>
</body>
</html>
